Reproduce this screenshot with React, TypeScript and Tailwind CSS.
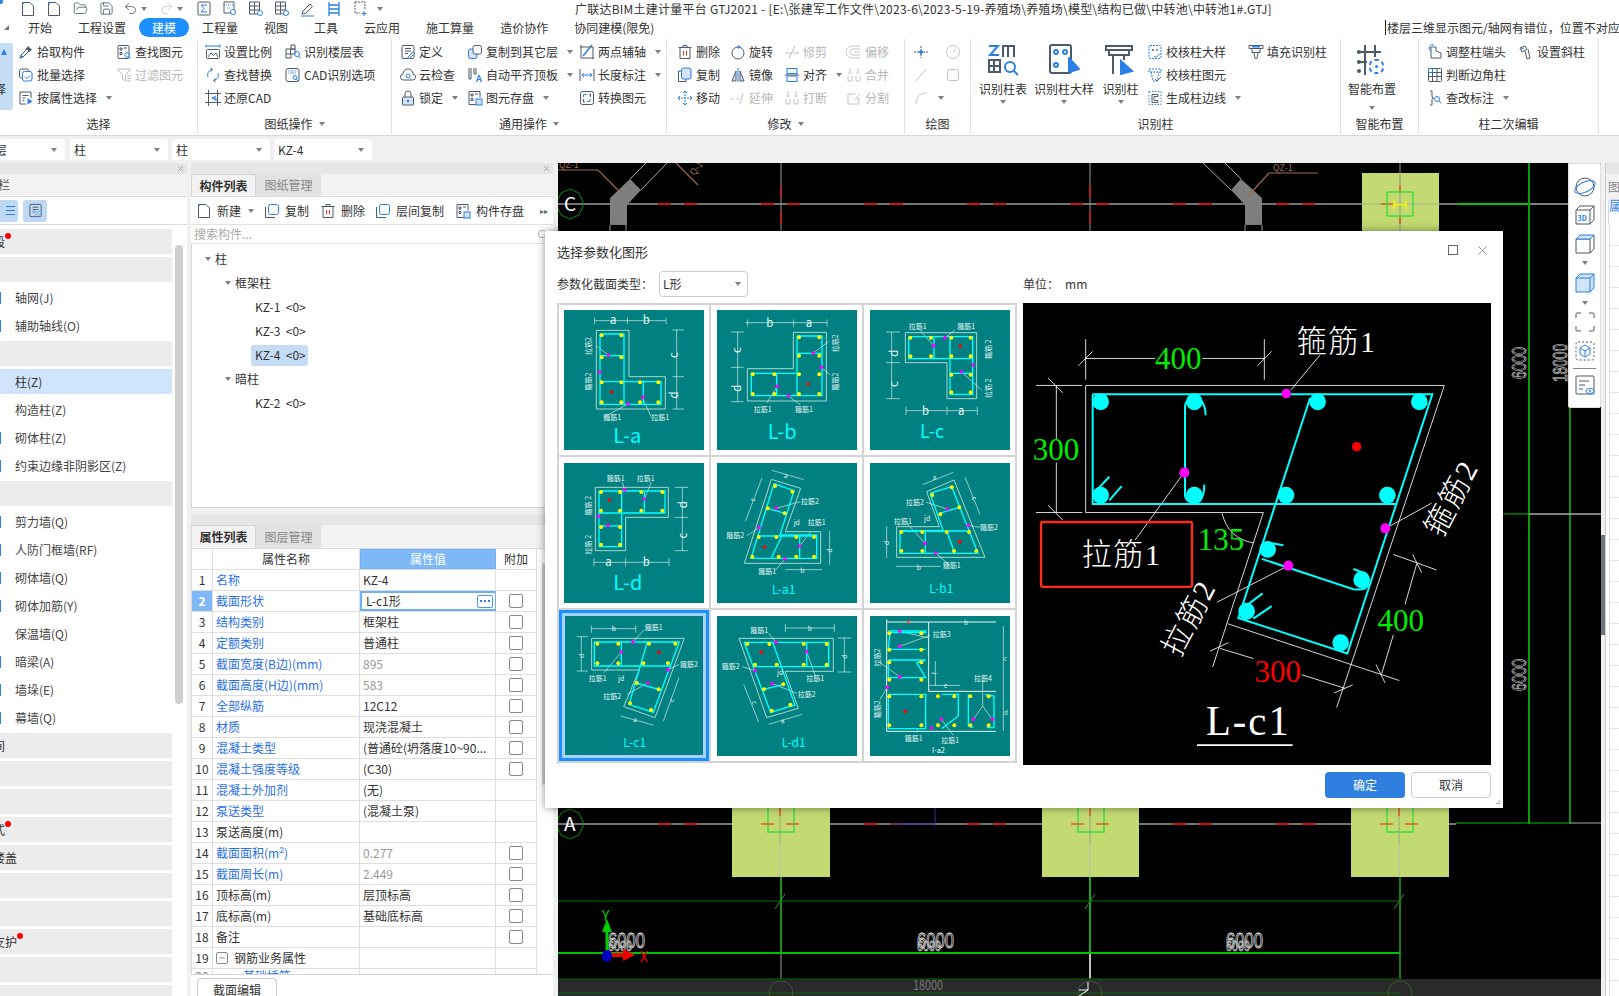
import React from "react";
import { Undo2, Redo2, Save, FolderOpen, X, Search, Minus } from "lucide-react";

const G = "#4e5969";
const B = "#2b7fe6";

// small ribbon icons, all on a 16 grid
const ICONS: Record<string, React.ReactNode> = {
  pick: (<><path d="M2 14l1-3 6-6 2 2-6 6z" stroke={G} /><path d="M8 4l4 4M10 2.5l3.5 3.5-2 .5-2-2z" fill={G} stroke={G} /><path d="M2 14l1.5-2.500 1 1z" fill={B} stroke={B} /></>),
  batch: (<><rect x="1.500" y="2" width="9" height="9" rx="2" stroke={G} /><rect x="4.500" y="4.500" width="9.500" height="9.500" rx="2" stroke={B} fill="#fff" /><path d="M7 9.500l2 2 3-3" stroke={B} /></>),
  attr: (<><path d="M13 8V2H2v12h6" stroke={G} /><path d="M4.500 5.500h6M4.500 8h3M4.500 10.500h2" stroke={G} /><path d="M9.500 8l5 3.500-5 3z" fill={B} /></>),
  find: (<><rect x="2" y="1.500" width="11" height="13" rx="1" stroke={G} /><path d="M4 4h2v2H4zM8 4h3M4 8.500h2v2H4z" stroke={G} /><circle cx="11" cy="11" r="2.200" stroke={B} fill="#fff" /><path d="M12.500 12.500l2 2" stroke={B} /></>),
  filter: (<path d="M1.500 2h13l-5 6v6l-3-2V8zM11 9h4M11 11.500h4M11 14h4" stroke="#bbb" />),
  scale: (<><path d="M1 2h14M1 .5v3M15 .5v3" stroke={B} /><rect x="1.500" y="5.500" width="13" height="9" rx="1" stroke={G} /><path d="M3 13l3-4 2.500 2.500L11 9l2 4" stroke={G} /></>),
  replace: (<><path d="M3 10a5.500 5.500 0 0 1 4-7.500M13 6a5.500 5.500 0 0 1-4 7.500" stroke={B} /><path d="M5.500 1l2 1.500-2 2M10.500 15l-2-1.500 2-2" stroke={G} /></>),
  restore: (<><path d="M3.500 0v16M12.500 0v16M0 3.500h16M0 12.500h16" stroke={G} /><path d="M11 6L7 8l4 2M7 8h4v3" stroke={B} /></>),
  floor: (<><path d="M6 1h4v4H6zM1 5h9v5H6v4H1z" stroke={G} /><path d="M1 10h5M5.500 5v5" stroke={G} /><circle cx="12" cy="10" r="2.500" stroke={B} /><path d="M13.500 12l2 2.500" stroke={B} /></>),
  cad: (<><rect x="1" y="1.500" width="13" height="13" rx="2" stroke={G} /><text x="2.500" y="7" fontSize="4.500" fill={B} stroke="none">CAD</text><circle cx="10" cy="10.500" r="2" stroke={B} /><path d="M11.500 12l2 2.500" stroke={B} /></>),
  define: (<><rect x="2" y="1.500" width="12" height="13" rx="1" stroke={G} /><path d="M5 4.500h6M5 7h6M5 9.500h3" stroke={G} /><path d="M8 13l5-5 1.500 1.500-5 5H8z" fill="#fff" stroke={B} /></>),
  cloud: (<><path d="M4 13a3 3 0 0 1-1-6 5 5 0 0 1 10 0 3 3 0 0 1-1 6z" stroke={G} /><circle cx="8" cy="9" r="2" stroke={B} /><path d="M9.500 10.500l1 1" stroke={B} /></>),
  lock: (<><path d="M5 7V4a3 3 0 0 1 6 0v3" stroke={G} /><rect x="2.500" y="7" width="11" height="8" rx="1" stroke={G} fill="#d2e4fb" /><path d="M8 10v2" stroke={B} strokeWidth="2" /></>),
  copyTo: (<><rect x="1.500" y="5" width="8.500" height="9.500" rx="2" stroke={B} fill="#d2e4fb" /><rect x="6" y="1.500" width="8.500" height="8.500" rx="2" stroke={G} fill="#fff" /></>),
  flat: (<><path d="M2 1v11h2V1M7 1v6h2V1" stroke={G} /><text x="9" y="15" fontSize="9" fontWeight="700" fill={B} stroke="none">A</text></>),
  store: (<><path d="M9 14.500H2v-13h11v6" stroke={G} /><path d="M4 4h2v2H4zM8 4h3M4 8.500h2v2H4z" stroke={G} /><rect x="9" y="9" width="6" height="6" stroke={B} fill="#d2e4fb" /></>),
  axis: (<><path d="M2 1v13h13" stroke={G} /><path d="M4 12L13 1" stroke={B} strokeWidth="1.500" /><path d="M1 3h13v12" stroke={G} /></>),
  length: (<><path d="M1 2v12M15 2v12" stroke={G} /><path d="M3 8h10M5 6L3 8l2 2M11 6l2 2-2 2" stroke={B} /></>),
  convert: (<><rect x="1.500" y="1.500" width="13" height="13" rx="2" stroke={G} /><path d="M4.500 7V4.500h3M11 9v2.500H8" stroke={B} /><path d="M10 4h1.500v3M4.500 9v3H6" stroke={G} /></>),
  del: (<><path d="M1.500 3.500h13M6 3.500V1.500h4v2M3 3.500v11h10v-11" stroke={G} /><path d="M6.500 7v4.500M9.500 7v4.500" stroke="#e33" /></>),
  copy: (<><path d="M4 4H1.500v10.500H9V12" stroke={G} /><rect x="4.500" y="1" width="9.500" height="11" rx="2" stroke={B} fill="#d2e4fb" /></>),
  move: (<><path d="M8 1v14M1 8h14" stroke={B} strokeDasharray="2 1" /><path d="M6 3l2-2 2 2M6 13l2 2 2-2M3 6L1 8l2 2M13 6l2 2-2 2" stroke={B} /></>),
  rotate: (<><circle cx="8" cy="9" r="6" stroke={G} /><path d="M8 1l3 2-3 2z" fill={B} /></>),
  trim: (<path d="M1 9h6M9 9h6M11 2L5 14" stroke="#bbb" />),
  mirror: (<><path d="M8 1v14" stroke={B} /><path d="M6 4L2 14h4zM10 4l4 10h-4z" stroke={G} fill="#d2e4fb" /></>),
  alignBox: (<><rect x="3" y="1.500" width="10" height="5" stroke={B} /><rect x="3" y="9" width="10" height="5.500" stroke={B} /><path d="M1 8h14" stroke={G} /></>),
  offset: (<path d="M14 2H6a3 3 0 0 0 0 12h8M14 5H7a1 1 0 0 0 0 6h7M8 8h6" stroke="#c4c4c4" />),
  merge: (<path d="M4 1v4M12 1v4M2 6h4M10 6h4M2 9v5h4V9M10 9v5h4V9" stroke="#c4c4c4" />),
  extend: (<path d="M1 9h3M6 9h3M13 3l-3 11" stroke="#c4c4c4" />),
  split: (<path d="M2 4h8M2 4v10h11V8M9 10l5-6M11 9l2 1" stroke="#c4c4c4" />),
  point: (<><path d="M1 8h5M10 8h5M8 2v4M8 10v4" stroke={G} strokeDasharray="2 1" /><circle cx="8" cy="8" r="1.500" fill={B} stroke={B} /></>),
  clock: (<><circle cx="8" cy="8" r="6.500" stroke="#c4c4c4" /><path d="M8 8l3-3" stroke="#c4c4c4" /></>),
  line: (<path d="M3 14L13 2" stroke="#c4c4c4" />),
  square: (<rect x="2.500" y="2.500" width="11" height="11" rx="2" stroke="#c4c4c4" />),
  arc: (<path d="M3 14C3 7 7 3 13 3" stroke="#c4c4c4" />),
  chk1: (<><rect x="2" y="1.500" width="12" height="13" rx="1" stroke={B} strokeDasharray="2 1" /><circle cx="6" cy="6" r="1" fill={G} /><circle cx="10" cy="6" r="1" fill={B} /><path d="M7 12l2 1.500 4-4" stroke={B} /></>),
  chk2: (<><path d="M2 2h12v3H2zM4 5l2 9h4l2-9" stroke={B} strokeDasharray="2 1" /><path d="M8 12l2 2 4-4" stroke={G} /></>),
  edge: (<><path d="M2 1.500h12v13H2z" stroke={B} strokeDasharray="1.500 1.500" /><path d="M5 4.500h6v2H7v4h4v2H5z" stroke={G} /></>),
  fill: (<><path d="M1 1.500h14v3H1zM4 4.500v4h8v-4M6 8.500l1 6h2l1-6" stroke={G} /><path d="M4 2.500h8" stroke={B} strokeWidth="2" /></>),
  adjust: (<><path d="M4 3v11h10v-5l-5-2V3z" stroke={G} /><path d="M4 7a3 3 0 0 1 3-6" stroke={B} /></>),
  slant: (<><path d="M2 4l5-2 2 3-5 3zM7 7l2 8 3-1-2-9" stroke={G} /><path d="M3 5l3-1" stroke={B} /></>),
  corner: (<><rect x="1.500" y="1.500" width="13" height="13" rx="1" stroke={G} /><path d="M1.500 5.500h13M1.500 9.500h13M5.500 1.500v13M10 1.500v13" stroke={G} /><path d="M1.500 1.500h4v4h-4z" stroke={B} /></>),
  tag: (<><path d="M3 1h2v6l1.500 1L5 9v6H3" stroke={G} /><circle cx="10" cy="9" r="2.500" stroke={B} /><path d="M12 11l2.500 2.500" stroke={B} /></>),
  paper: (<><path d="M10 1.500H2.500v13h11V5z" stroke={G} /><path d="M2 1h2v2H2z" fill={B} /></>),
  pages: (<><path d="M1.500 4v10.500H11" stroke={G} /><rect x="4.500" y="1.500" width="10" height="10" rx="2" stroke={B} /></>),
  sigma: (<><rect x="2" y="1" width="12" height="13" rx="1" stroke={G} /><path d="M11 4H5l3 3.500L5 11h6" stroke={B} /></>),
  sheetQ: (<><path d="M2 1h10v11H2z" stroke={G} /><path d="M2 4h10M5 7h4" stroke={B} strokeDasharray="1 1" /><circle cx="11" cy="11" r="2.500" stroke={B} fill="#fff" /></>),
  gridQ: (<><path d="M1.500 1h10v12h-10zM1.500 5h10M1.500 9h10M6.500 1v12" stroke={G} /><circle cx="12" cy="12" r="2.500" stroke={B} fill="#fff" /></>),
  pen: (<><path d="M2 13l1-3 7-7 2.500 2.500-7 7z" stroke={G} /><path d="M1 15h13" stroke={B} /></>),
  ladder: (<path d="M3 1v14M13 1v14M3 4h10M3 8h10M3 12h10" stroke={B} strokeWidth="1.300" />),
  plusDoc: (<><path d="M3 1h10v7M3 1v11h5" stroke={G} strokeDasharray="2 1" /><path d="M12 10v5M9.500 12.500h5" stroke={B} /></>),
};

const Ico = ({ n, s = 16 }: { n: string; s?: number }) => (
  <svg width={s} height={s} viewBox="0 0 16 16" fill="none" className="shrink-0">
    {ICONS[n]}
  </svg>
);

const Caret = ({ className = "ml-[6px]" }: { className?: string }) => (
  <span className={`inline-block h-0 w-0 shrink-0 border-x-[3px] border-t-[4px] border-x-transparent border-t-[#808080] ${className}`} />
);

const Btn = ({ n, t, caret, off }: { n: string; t?: string; caret?: boolean; off?: boolean }) => (
  <div className="flex h-[23px] items-center gap-[3px] whitespace-nowrap">
    <Ico n={n} />
    {t && <span className={off ? "text-[#b8b8b8]" : ""}>{t}</span>}
    {caret && <Caret />}
  </div>
);

const Big = ({ w, t, caretTop, children }: { w: string; t: string; caretTop?: string; children: React.ReactNode }) => (
  <div className={`flex flex-col items-center pt-[3px] ${w}`}>
    <svg width="34" height="34" viewBox="0 0 34 34" fill="none" strokeWidth="2">
      {children}
    </svg>
    <span className="mt-[4px] whitespace-nowrap leading-[16px]">{t}</span>
    <Caret className={`${caretTop ?? "mt-[3px]"} ml-0`} />
  </div>
);

const Group = ({ w, label, caret, children }: { w: string; label: string; caret?: boolean; children: React.ReactNode }) => (
  <div className={`flex h-[95px] shrink-0 flex-col border-r border-[#e2e2e2] ${w}`}>
    <div className="flex h-[75px] pt-[1px]">{children}</div>
    <div className="flex h-[19px] items-center justify-center">
      {label}
      {caret && <Caret className="ml-[6px]" />}
    </div>
  </div>
);

const Col = ({ w, children }: { w?: string; children: React.ReactNode }) => (
  <div className={`flex shrink-0 flex-col ${w ?? ""}`}>{children}</div>
);

const TitleBar = () => (
  <div className="flex h-[17px] items-center overflow-hidden bg-white">
    <span className="mb-[14px] h-[5px] w-[3px] rounded-r-full bg-[#2b7fe6]" />
    <div className="ml-[12px] flex items-center">
      {["paper", "paper", "open", "save"].map((n, i) => (
        <div key={i} className="flex w-[26px] justify-center">
          {n === "open" ? <FolderOpen size={15} color={G} strokeWidth={1.300} /> : n === "save" ? <Save size={15} color={G} strokeWidth={1.300} /> : <Ico n={n} />}
        </div>
      ))}
      <div className="flex w-[36px] items-center pl-[4px]">
        <Undo2 size={15} color={G} strokeWidth={1.300} />
        <Caret className="ml-[3px]" />
      </div>
      <div className="flex w-[36px] items-center pl-[4px]">
        <Redo2 size={15} color="#c4c4c4" strokeWidth={1.300} />
        <Caret className="ml-[3px]" />
      </div>
      {["sigma", "sheetQ", "gridQ", "gridQ", "pen", "ladder", "plusDoc"].map((n, i) => (
        <div key={i} className="flex w-[26px] justify-center">
          <Ico n={n} />
        </div>
      ))}
      <Caret className="ml-[4px]" />
    </div>
    <span className="ml-[192px] whitespace-nowrap tracking-[0.24px]">广联达BIM土建计量平台 GTJ2021 - [E:\张建军工作文件\2023-6\2023-5-19-养殖场\养殖场\模型\结构已做\中转池\中转池1#.GTJ]</span>
  </div>
);

const TabBar = () => (
  <div className="flex h-[21px] items-center bg-white">
    <span className="ml-[4px] h-0 w-0 border-b-[5px] border-l-[5px] border-b-[#777] border-l-transparent" />
    <div className="ml-[19px] flex items-center gap-[26px]">
      <span>开始</span>
      <span>工程设置</span>
      <span className="-mx-[13px] flex h-[19px] items-center rounded-full bg-[#1e8fff] px-[13px] text-white">建模</span>
      <span>工程量</span>
      <span>视图</span>
      <span>工具</span>
      <span>云应用</span>
      <span>施工算量</span>
      <span>造价协作</span>
      <span>协同建模(限免)</span>
    </div>
    <div className="ml-auto h-[15px] w-[234px] overflow-hidden whitespace-nowrap border-l border-[#222] pl-[1px] leading-[15px]">
      楼层三维显示图元/轴网有错位，位置不对应
    </div>
  </div>
);

const Ribbon = () => (
  <div className="flex h-[98px] border-b border-[#d8d8d8] bg-white pt-[1px]">
    <Group w="w-[198px]" label="选择">
      <div className="mt-[3px] flex h-[67px] w-[13px] shrink-0 flex-col overflow-hidden rounded-r-[3px] bg-[#c5dcf5]">
        <span className="mt-[6px] ml-[1px] h-0 w-0 border-x-[3px] border-b-[6px] border-x-transparent border-b-[#2b7fe6]" />
        <span className="-ml-[6px] mt-[26px] leading-[16px]">择</span>
      </div>
      <Col w="ml-[5px] w-[98px]">
        <Btn n="pick" t="拾取构件" />
        <Btn n="batch" t="批量选择" />
        <Btn n="attr" t="按属性选择" caret />
      </Col>
      <Col>
        <Btn n="find" t="查找图元" />
        <Btn n="filter" t="过滤图元" off />
      </Col>
    </Group>
    <Group w="w-[194px]" label="图纸操作" caret>
      <Col w="ml-[7px] w-[80px]">
        <Btn n="scale" t="设置比例" />
        <Btn n="replace" t="查找替换" />
        <Btn n="restore" t="还原CAD" />
      </Col>
      <Col>
        <Btn n="floor" t="识别楼层表" />
        <Btn n="cad" t="CAD识别选项" />
      </Col>
    </Group>
    <Group w="w-[275px]" label="通用操作" caret>
      <Col w="ml-[8px] w-[67px]">
        <Btn n="define" t="定义" />
        <Btn n="cloud" t="云检查" />
        <Btn n="lock" t="锁定" caret />
      </Col>
      <Col w="w-[112px]">
        <Btn n="copyTo" t="复制到其它层" caret />
        <Btn n="flat" t="自动平齐顶板" caret />
        <Btn n="store" t="图元存盘" caret />
      </Col>
      <Col>
        <Btn n="axis" t="两点辅轴" caret />
        <Btn n="length" t="长度标注" caret />
        <Btn n="convert" t="转换图元" />
      </Col>
    </Group>
    <Group w="w-[238px]" label="修改" caret>
      <Col w="ml-[10px] w-[53px]">
        <Btn n="del" t="删除" />
        <Btn n="copy" t="复制" />
        <Btn n="move" t="移动" />
      </Col>
      <Col w="w-[54px]">
        <Btn n="rotate" t="旋转" />
        <Btn n="mirror" t="镜像" />
        <Btn n="extend" t="延伸" off />
      </Col>
      <Col w="w-[62px]">
        <Btn n="trim" t="修剪" off />
        <Btn n="alignBox" t="对齐" caret />
        <Btn n="merge" t="打断" off />
      </Col>
      <Col>
        <Btn n="offset" t="偏移" off />
        <Btn n="merge" t="合并" off />
        <Btn n="split" t="分割" off />
      </Col>
    </Group>
    <Group w="w-[66px]" label="绘图">
      <Col w="ml-[8px] w-[32px]">
        <Btn n="point" />
        <Btn n="line" />
        <Btn n="arc" caret />
      </Col>
      <Col>
        <Btn n="clock" />
        <Btn n="square" />
      </Col>
    </Group>
    <Group w="w-[370px]" label="识别柱">
      <div className="ml-[1px] flex">
        <Big w="w-[62px]" t="识别柱表">
          <path d="M3 3h9L4 12h9" stroke={B} />
          <path d="M17 14V3h11v11M22 3v11M3 17h11v12H3zM3 23h11M8 17v12" stroke={G} />
          <circle cx="24" cy="24" r="5" stroke={B} />
          <path d="M28 28l4 4" stroke={B} />
        </Big>
        <Big w="w-[60px]" t="识别柱大样">
          <rect x="3" y="2" width="21" height="28" rx="2" stroke={G} />
          <circle cx="9" cy="9" r="2" stroke={B} />
          <circle cx="18" cy="9" r="2" stroke={B} />
          <circle cx="9" cy="22" r="2" stroke={B} />
          <path d="M22 15l10 11-10 3z" fill={B} stroke={B} strokeLinejoin="round" />
        </Big>
        <Big w="w-[53px]" t="识别柱">
          <path d="M2 3h26v4H2zM5 7v5h20V7M9 12v19M20 12v5" stroke={G} />
          <path d="M17 18l11 10-11 3z" fill={B} stroke={B} />
        </Big>
      </div>
      <Col w="w-[101px]">
        <Btn n="chk1" t="校核柱大样" />
        <Btn n="chk2" t="校核柱图元" />
        <Btn n="edge" t="生成柱边线" caret />
      </Col>
      <Col>
        <Btn n="fill" t="填充识别柱" />
      </Col>
    </Group>
    <Group w="w-[78px]" label="智能布置">
      <Big w="w-[62px]" t="智能布置" caretTop="mt-[9px]">
        <path d="M10 2v30M20 2v12M2 9h24M2 19h10" stroke={G} />
        <circle cx="4" cy="9" r="2" fill={G} />
        <circle cx="4" cy="19" r="2" fill={G} />
        <circle cx="4" cy="28" r="2" fill={G} />
        <rect x="15" y="17" width="13" height="13" rx="5" stroke={B} strokeDasharray="4 3" />
        <circle cx="21.500" cy="23.500" r="1.500" fill={B} />
      </Big>
    </Group>
    <Group w="w-[180px]" label="柱二次编辑">
      <Col w="ml-[8px] w-[91px]">
        <Btn n="adjust" t="调整柱端头" />
        <Btn n="corner" t="判断边角柱" />
        <Btn n="tag" t="查改标注" caret />
      </Col>
      <Col>
        <Btn n="slant" t="设置斜柱" />
      </Col>
    </Group>
  </div>
);

const Pick = ({ w, t, clip }: { w: string; t: string; clip?: boolean }) => (
  <div className={`flex h-[21px] items-center justify-between rounded-[3px] bg-white pr-[8px] ${clip ? "" : "pl-[4px]"} ${w}`}>
    <span className={clip ? "-ml-[5px]" : ""}>{t}</span>
    <Caret className="ml-0" />
  </div>
);

const FilterBar = () => (
  <div className="flex h-[27px] items-start gap-[4px] bg-[#f0f0f0] pt-[3px]">
    <Pick w="w-[65px] mr-[1px]" t="层" clip />
    <Pick w="w-[98px]" t="柱" />
    <Pick w="w-[98px]" t="柱" />
    <Pick w="w-[98px]" t="KZ-4" />
  </div>
);

type NavRow = { t?: string; bar?: boolean; on?: boolean; dot?: boolean; mark?: boolean };
const NAV: NavRow[] = [
  { t: "段", bar: true, dot: true },
  { bar: true },
  { t: "轴网(J)", mark: true },
  { t: "辅助轴线(O)", mark: true },
  { bar: true },
  { t: "柱(Z)", on: true, mark: true },
  { t: "构造柱(Z)" },
  { t: "砌体柱(Z)", mark: true },
  { t: "约束边缘非阴影区(Z)", mark: true },
  { bar: true },
  { t: "剪力墙(Q)", mark: true },
  { t: "人防门框墙(RF)", mark: true },
  { t: "砌体墙(Q)", mark: true },
  { t: "砌体加筋(Y)", mark: true },
  { t: "保温墙(Q)" },
  { t: "暗梁(A)", mark: true },
  { t: "墙垛(E)", mark: true },
  { t: "幕墙(Q)", mark: true },
  { t: "间", bar: true },
  { bar: true },
  { bar: true },
  { t: "式", bar: true, dot: true },
  { t: "楼盖", bar: true },
  { bar: true },
  { bar: true },
  { t: "支护", bar: true, dot: true },
  { bar: true },
  { bar: true },
];

const PanelHead = () => (
  <div className="flex h-[11px] shrink-0 items-center justify-end bg-[#e6e6e6] pr-[2px]">
    <X size={9} color="#999" />
  </div>
);

const LeftPanel = () => (
  <div className="flex h-full w-[187px] shrink-0 flex-col overflow-hidden bg-white">
    <PanelHead />
    <div className="flex h-[23px] shrink-0 items-center border-b border-[#dcdcdc] bg-[#f2f2f2]">
      <span className="-ml-[2px] text-[#555]">栏</span>
    </div>
    <div className="flex h-[28px] shrink-0 items-center gap-[5px] border-b border-[#dcdcdc]">
      <div className="flex h-[22px] w-[18px] items-center justify-end rounded-r-[3px] bg-[#bfd8f3] pr-[3px]">
        <span className="flex h-[9px] w-[9px] flex-col justify-between">
          <span className="h-[1px] bg-[#2b7fe6]" />
          <span className="h-[1px] bg-[#2b7fe6]" />
          <span className="h-[1px] bg-[#2b7fe6]" />
        </span>
      </div>
      <div className="flex h-[22px] w-[24px] items-center justify-center rounded-[3px] bg-[#bfd8f3]">
        <Ico n="define" s={15} />
      </div>
    </div>
    <div className="flex min-h-0 flex-1 pt-[4px]">
      <div className="w-[172px] shrink-0">
        {NAV.map((r, i) =>
          r.bar || r.on ? (
            <div key={i} className="h-[28px]">
              <div className={`relative flex h-[25px] items-center ${r.on ? "bg-[#d0e4fb]" : "bg-[#ececec]"}`}>
                {r.on ? <span className="ml-[15px]">{r.t}</span> : <span className="-ml-[7px]">{r.t}</span>}
                {r.dot && <span className="mb-[12px] h-[6px] w-[6px] rounded-full bg-[#f00]" />}
              </div>
            </div>
          ) : (
            <div key={i} className="flex h-[28px] items-center pb-[2px]">
              <span className={`h-[12px] w-[1px] ${r.mark ? "bg-[#2b7fe6]" : ""}`} />
              <span className="ml-[14px] whitespace-nowrap text-[#444]">{r.t}</span>
            </div>
          ),
        )}
      </div>
      <div className="ml-[3px] mt-[16px] h-[459px] w-[8px] rounded-full bg-[#cfcfcf]" />
    </div>
  </div>
);

const Tabs = ({ a, b, h = "h-[23px]" }: { a: string; b: string; h?: string }) => (
  <div className={`flex shrink-0 items-stretch border-b border-[#dcdcdc] bg-[#f2f2f2] ${h}`}>
    <span className="flex w-[65px] items-center justify-center border border-b-0 border-[#d5d5d5] font-bold">{a}</span>
    <span className="flex w-[65px] items-center justify-center bg-[#e2e2e2] text-[#888]">{b}</span>
  </div>
);

const TreeRow = ({ t, pl, arrow, on }: { t: string; pl: string; arrow?: boolean; on?: boolean }) => (
  <div className={`flex h-[24px] items-center whitespace-pre ${pl}`}>
    {arrow && <Caret className="mr-[4px] ml-0" />}
    <span className={on ? "-ml-[4px] flex h-[21px] items-center rounded-[3px] bg-[#c5dcf5] pl-[4px] pr-[2px]" : ""}>{t}</span>
  </div>
);

const TopPanel = () => (
  <div className="flex h-[345px] shrink-0 flex-col bg-white">
    <PanelHead />
    <Tabs a="构件列表" b="图纸管理" />
    <div className="flex h-[28px] shrink-0 items-center whitespace-nowrap border-b border-[#e2e2e2] pl-[5px]">
      <Ico n="paper" />
      <span className="ml-[5px]">新建</span>
      <Caret className="ml-[7px]" />
      <span className="ml-[10px] flex items-center gap-[5px]"><Ico n="pages" />复制</span>
      <span className="ml-[11px] flex items-center gap-[5px]"><Ico n="del" />删除</span>
      <span className="ml-[10px] flex items-center gap-[5px]"><Ico n="pages" />层间复制</span>
      <span className="ml-[11px] flex items-center gap-[5px]"><Ico n="store" />构件存盘</span>
      <span className="ml-[16px] text-[8px] text-[#666]">▸▸</span>
    </div>
    <div className="flex h-[19px] shrink-0 items-center justify-between border-b border-[#e2e2e2] pl-[3px] pr-[5px] text-[#aaa]">
      <span>搜索构件...</span>
      <Search size={11} color="#aaa" />
    </div>
    <div className="flex-1 border-b border-l border-[#d5d5d5] pt-[3px]">
      <TreeRow t="柱" pl="pl-[13px]" arrow />
      <TreeRow t="框架柱" pl="pl-[33px]" arrow />
      <TreeRow t="KZ-1  <0>" pl="pl-[63px]" />
      <TreeRow t="KZ-3  <0>" pl="pl-[63px]" />
      <TreeRow t="KZ-4  <0>" pl="pl-[63px]" on />
      <TreeRow t="暗柱" pl="pl-[33px]" arrow />
      <TreeRow t="KZ-2  <0>" pl="pl-[63px]" />
    </div>
  </div>
);

type Prop = { n: string; v?: string; link?: boolean; dim?: boolean; box?: boolean };
const PROPS: Prop[] = [
  { n: "名称", v: "KZ-4", link: true },
  { n: "截面形状", v: "L-c1形", link: true, box: true },
  { n: "结构类别", v: "框架柱", link: true, box: true },
  { n: "定额类别", v: "普通柱", link: true, box: true },
  { n: "截面宽度(B边)(mm)", v: "895", link: true, dim: true, box: true },
  { n: "截面高度(H边)(mm)", v: "583", link: true, dim: true, box: true },
  { n: "全部纵筋", v: "12C12", link: true, box: true },
  { n: "材质", v: "现浇混凝土", link: true, box: true },
  { n: "混凝土类型", v: "(普通砼(坍落度10~90...", link: true, box: true },
  { n: "混凝土强度等级", v: "(C30)", link: true, box: true },
  { n: "混凝土外加剂", v: "(无)", link: true },
  { n: "泵送类型", v: "(混凝土泵)", link: true },
  { n: "泵送高度(m)" },
  { n: "截面面积(m²)", v: "0.277", link: true, dim: true, box: true },
  { n: "截面周长(m)", v: "2.449", link: true, dim: true, box: true },
  { n: "顶标高(m)", v: "层顶标高", box: true },
  { n: "底标高(m)", v: "基础底标高", box: true },
  { n: "备注", box: true },
];

const PropRow = ({ p, i }: { p: Prop; i: number }) => {
  const picked = i === 1;
  return (
    <div className="flex h-[21px] border-b border-[#dedede]">
      <div className={`flex w-[21px] shrink-0 items-center justify-center border-r border-[#dedede] ${picked ? "bg-[#7eb8f7] font-bold text-white" : ""}`}>{i + 1}</div>
      <div className={`flex w-[147px] shrink-0 items-center border-r border-[#dedede] pl-[3px] whitespace-nowrap ${p.link ? "text-[#2b6fe6]" : ""}`}>{p.n}</div>
      <div className={`flex w-[136px] shrink-0 items-center whitespace-nowrap border-r pl-[3px] ${picked ? "border-2 border-[#6fb0f5]" : "border-r-[#dedede]"} ${p.dim ? "text-[#999]" : ""}`}>
        <span className={picked ? "ml-[1px] flex-1" : ""}>{p.v}</span>
        {picked && (
          <span className="mr-[2px] flex h-[13px] w-[16px] items-center justify-center gap-[2px] rounded-[2px] border border-[#4a98ee]">
            <span className="h-[2px] w-[2px] bg-[#2b7fe6]" />
            <span className="h-[2px] w-[2px] bg-[#2b7fe6]" />
            <span className="h-[2px] w-[2px] bg-[#2b7fe6]" />
          </span>
        )}
      </div>
      <div className="flex w-[41px] shrink-0 items-center justify-center border-r border-[#dedede]">
        {p.box && <span className="h-[14px] w-[14px] rounded-[2px] border border-[#888]" />}
      </div>
    </div>
  );
};

const PropPanel = () => (
  <div className="mt-[6px] flex min-h-0 flex-1 flex-col bg-white">
    <PanelHead />
    <Tabs a="属性列表" b="图层管理" h="h-[24px]" />
    <div className="flex h-[426px] shrink-0 border-b border-l border-[#d5d5d5] overflow-hidden">
      <div className="w-[345px] shrink-0">
        <div className="flex h-[21px] border-b border-[#dedede]">
          <div className="w-[21px] shrink-0 border-r border-[#dedede]" />
          <div className="flex w-[147px] shrink-0 items-center justify-center border-r border-[#dedede]">属性名称</div>
          <div className="flex w-[136px] shrink-0 items-center justify-center border border-[#6fb0f5] bg-[#7eb8f7] text-white">属性值</div>
          <div className="flex w-[41px] shrink-0 items-center justify-center border-r border-[#dedede]">附加</div>
        </div>
        {PROPS.map((p, i) => (
          <PropRow key={i} p={p} i={i} />
        ))}
        <div className="flex h-[21px] border-b border-[#dedede]">
          <div className="flex w-[21px] shrink-0 items-center justify-center border-r border-[#dedede]">19</div>
          <div className="flex w-[147px] shrink-0 items-center gap-[6px] border-r border-[#dedede] pl-[3px]">
            <span className="flex h-[12px] w-[12px] items-center justify-center rounded-[2px] border border-[#888]"><Minus size={8} color="#555" /></span>
            钢筋业务属性
          </div>
          <div className="w-[136px] shrink-0 border-r border-[#dedede]" />
          <div className="w-[41px] shrink-0 border-r border-[#dedede]" />
        </div>
        <div className="flex h-[8px] overflow-hidden">
          <div className="w-[21px] shrink-0 border-r border-[#dedede] text-center leading-[14px] text-[#888]">20</div>
          <div className="w-[147px] shrink-0 border-r border-[#dedede] pl-[30px] leading-[14px] text-[#2b6fe6]">基础插筋</div>
          <div className="w-[136px] shrink-0 border-r border-[#dedede]" />
          <div className="w-[41px] shrink-0 border-r border-[#dedede]" />
        </div>
      </div>
      <div className="ml-[5px] mt-[14px] h-[222px] w-[4px] rounded-full bg-[#cfcfcf]" />
    </div>
    <div className="flex flex-1 items-start overflow-hidden pl-[6px] pt-[3px]">
      <span className="flex h-[22px] w-[80px] items-center justify-center rounded-t-[4px] border border-b-0 border-[#cfcfcf] bg-white">截面编辑</span>
    </div>
  </div>
);

// red dashes that sit on an axis line, one pair per repeat
const dashes = (y: number, xs: number[]) =>
  xs.map((x) => (
    <g key={x} stroke="#d01010" strokeWidth="2">
      <line x1={x} y1={y} x2={x + 13} y2={y} />
      <line x1={x + 26} y1={y} x2={x + 39} y2={y} />
    </g>
  ));

const Pillar = ({ x }: { x: number }) => (
  <g>
    <rect x={x} y="808" width={x === 1042 ? 97 : 98} height="69" fill="#c3da72" />
    <line x1={x + 48} y1="808" x2={x + 48} y2="843" stroke="#9aa87a" />
    <line x1={x + 48} y1="843" x2={x + 48} y2="877" stroke="#bbb" />
    <path d={`M${x + 36} 808v24h26v-24`} stroke="#3ce03c" fill="none" strokeWidth="1.500" />
    <g stroke="#e05a20" strokeWidth="1.500">
      <line x1={x + 29} y1="824" x2={x + 42} y2="824" />
      <line x1={x + 54} y1="824" x2={x + 67} y2="824" />
      <line x1={x + 48} y1="808" x2={x + 48} y2="816" />
    </g>
  </g>
);

const DimText = ({ x }: { x: number }) => (
  <g fill="none" stroke="#eee" strokeWidth="0.800" className="font-[family-name:'Liberation_Sans',sans-serif]">
    <text x={x} y="948" fontSize="22" textLength="37" lengthAdjust="spacingAndGlyphs">6000</text>
    <text x={x} y="951" fontSize="15" textLength="24" lengthAdjust="spacingAndGlyphs" stroke="#bbb">6000</text>
  </g>
);

const Canvas = () => (
  <div className="relative h-full w-[1043px] shrink-0 bg-black">
    <svg viewBox="558 163 1043 833" width="1043" height="833" className="block">
      {/* top axis */}
      <line x1="558" y1="204" x2="1362" y2="204" stroke="#9a9a9a" strokeWidth="1.500" />
      {dashes(204, [658, 761, 864, 967, 1070, 1173, 1276])}
      <line x1="1439" y1="204" x2="1457" y2="204" stroke="#9a9a9a" strokeWidth="1.500" />
      <line x1="1457" y1="204" x2="1529" y2="204" stroke="#00c000" strokeWidth="2" />
      <line x1="1529" y1="204" x2="1568" y2="204" stroke="#aaa" strokeWidth="1.500" />
      <line x1="781" y1="163" x2="781" y2="231" stroke="#999" />
      <line x1="1090" y1="163" x2="1090" y2="231" stroke="#999" />
      <g stroke="#d01010" strokeWidth="1.500">
        <path d="M781 185v13M781 211v13M1090 185v13M1090 211v13" />
      </g>
      {/* grey wall stubs */}
      <path d="M610 225v-27l20-19 11 11-14 15v20z" fill="#7e7e7e" />
      <path d="M630 179l16-16M641 190l26-27M610 225v6M626 225v6" stroke="#aaa" fill="none" />
      <path d="M1262 225v-27l-21-19-10 11 14 15v20z" fill="#7e7e7e" />
      <path d="M1241 179l-16-16M1231 190l-28-27M1262 225v6M1245 225v6" stroke="#aaa" fill="none" />
      <path d="M558 170h40l23 23M1318 173h-49l-21 23M676 163l22 22" stroke="#a06a50" fill="none" strokeWidth="1.200" />
      <text x="1273" y="171" fontSize="9" fill="#a06a50">QZ-1</text>
      <text x="559" y="168" fontSize="9" fill="#a06a50">QZ-1</text>
      <text x="0" y="0" fontSize="9" fill="#a06a50" transform="translate(694 176) rotate(-50)">Q-1</text>
      {/* top right pillar */}
      <rect x="1362" y="173" width="77" height="58" fill="#c3da72" />
      <line x1="1400" y1="163" x2="1400" y2="231" stroke="#8f9a80" />
      <line x1="1362" y1="204" x2="1439" y2="204" stroke="#a8b090" />
      <path d="M1381 204h12M1400 185v8M1400 216v8" stroke="#e05a20" strokeWidth="1.500" />
      <rect x="1387" y="192" width="26" height="24" rx="1" fill="none" stroke="#3ce03c" strokeWidth="1.500" />
      <path d="M1394 200v9M1406 200v9M1394 204.500h12" stroke="#f5f500" strokeWidth="1.500" fill="none" />
      {/* right grid */}
      <line x1="1529" y1="163" x2="1529" y2="824" stroke="#0a9a0a" strokeWidth="2" />
      <line x1="1570" y1="163" x2="1570" y2="824" stroke="#10c010" strokeWidth="1.500" />
      <line x1="1503" y1="514" x2="1529" y2="514" stroke="#00c000" />
      <line x1="1529" y1="514" x2="1601" y2="514" stroke="#aaa" strokeWidth="1.500" />
      <line x1="1456" y1="823" x2="1570" y2="823" stroke="#00c000" />
      <line x1="1570" y1="823" x2="1601" y2="823" stroke="#aaa" />
      <g fill="none" stroke="#ddd" strokeWidth="0.700" className="font-[family-name:'Liberation_Sans',sans-serif]">
        <text transform="translate(1526 379) rotate(-90)" fontSize="20" textLength="32" lengthAdjust="spacingAndGlyphs">6000</text>
        <text transform="translate(1567 382) rotate(-90)" fontSize="20" textLength="38" lengthAdjust="spacingAndGlyphs">18000</text>
        <text transform="translate(1526 691) rotate(-90)" fontSize="20" textLength="32" lengthAdjust="spacingAndGlyphs">6000</text>
      </g>
      {/* bottom axis */}
      <line x1="558" y1="824" x2="1456" y2="824" stroke="#9a9a9a" strokeWidth="1.500" />
      {dashes(824, [658, 864, 967, 1173, 1276])}
      <line x1="891" y1="824" x2="935" y2="824" stroke="#3a3a90" strokeWidth="1.500" />
      <line x1="935" y1="808" x2="935" y2="826" stroke="#3a3a90" />
      <Pillar x={732} />
      <Pillar x={1042} />
      <Pillar x={1351} />
      <line x1="781" y1="877" x2="781" y2="953" stroke="#22c022" strokeWidth="1.500" />
      <line x1="1090" y1="877" x2="1090" y2="953" stroke="#22e022" strokeWidth="1.500" />
      <line x1="1400" y1="877" x2="1400" y2="979" stroke="#22a022" strokeWidth="1.500" />
      <line x1="781" y1="953" x2="781" y2="980" stroke="#999" />
      <line x1="1090" y1="953" x2="1090" y2="980" stroke="#fff" strokeWidth="1.500" />
      <line x1="558" y1="901" x2="1400" y2="901" stroke="#064c06" strokeWidth="1.500" />
      <line x1="558" y1="953" x2="1400" y2="953" stroke="#00c000" strokeWidth="2" />
      <path d="M775 909l10-15M1085 909l10-15M1394 909l10-15" stroke="#2a9a2a" />
      <rect x="558" y="979" width="1043" height="17" fill="#2a2a2a" />
      <line x1="558" y1="979" x2="1400" y2="979" stroke="#0a4a0a" strokeWidth="1.500" />
      <line x1="558" y1="993" x2="1400" y2="993" stroke="#155515" strokeWidth="1.500" />
      <DimText x={608} />
      <DimText x={917} />
      <DimText x={1226} />
      <text x="913" y="990" fontSize="14" fill="#777" textLength="30" lengthAdjust="spacingAndGlyphs">18000</text>
      <g fill="none" stroke="#3a5a3a">
        <circle cx="781" cy="993" r="12" />
        <circle cx="1090" cy="993" r="12" />
        <circle cx="1400" cy="993" r="12" />
      </g>
      <path d="M1088 982v8h-9M1079 996l9-6" stroke="#fff" fill="none" />
      {/* axis bubbles */}
      <g fill="none" stroke="#0c8a0c">
        <polygon points="570,189 579,193 584,204 579,215 570,219 561,215 556,204 561,193" />
        <polygon points="570,809 579,813 584,824 579,835 570,839 561,835 556,824 561,813" />
      </g>
      <text x="564" y="211" fontSize="19" fill="#fff">C</text>
      <text x="564" y="831" fontSize="19" fill="#fff">A</text>
      {/* UCS marker */}
      <path d="M607 955v-26" stroke="#00d000" strokeWidth="3" />
      <path d="M602 932l5-13 5 13z" fill="#00d000" />
      <path d="M610 955h15" stroke="#f00000" strokeWidth="4" />
      <path d="M623 949l12 6-12 6z" fill="#f00000" />
      <ellipse cx="607" cy="956" rx="5" ry="6" fill="#0000c0" />
      <text x="602" y="921" fontSize="14" fill="#00d000">Y</text>
      <text x="640" y="962" fontSize="14" fill="#f00000">X</text>
    </svg>
    <div className="absolute left-[1010px] top-0 flex h-[245px] w-[33px] flex-col items-center rounded-b-[2px] border border-[#dedede] bg-white pt-[12px]">
      <svg width="22" height="22" viewBox="0 0 22 22" fill="none" className="shrink-0">
        <ellipse cx="11" cy="11" rx="9" ry="9" stroke={G} />
        <ellipse cx="11" cy="11" rx="11" ry="5" transform="rotate(-25 11 11)" stroke={B} />
      </svg>
      <svg width="20" height="20" viewBox="0 0 20 20" fill="none" className="mt-[7px] shrink-0">
        <path d="M1 5h14v14H1zM1 5l4-4h14v14l-4 4M15 5l4-4" stroke={G} />
        <text x="2.500" y="16" fontSize="7" fontWeight="700" fill={B}>3D</text>
      </svg>
      <svg width="20" height="20" viewBox="0 0 20 20" fill="none" className="mt-[9px] shrink-0">
        <path d="M1 5h14v14H1zM15 19l4-4V1M15 5l4-4" stroke={G} />
        <path d="M1 5l4-4h14l-4 4z" stroke={B} fill="#d2e4fb" />
      </svg>
      <Caret className="ml-0 mt-[7px]" />
      <svg width="20" height="20" viewBox="0 0 20 20" fill="none" className="mt-[8px] shrink-0">
        <path d="M1 5h14v14H1zM1 5l4-4h14v14l-4 4M15 5l4-4" stroke={B} fill="#d2e4fb" />
      </svg>
      <Caret className="ml-0 mt-[8px]" />
      <svg width="20" height="20" viewBox="0 0 20 20" fill="none" className="mt-[7px] shrink-0">
        <path d="M1 6V2a1 1 0 0 1 1-1h4M14 1h4a1 1 0 0 1 1 1v4M19 14v4a1 1 0 0 1-1 1h-4M6 19H2a1 1 0 0 1-1-1v-4" stroke={G} />
      </svg>
      <svg width="20" height="20" viewBox="0 0 20 20" fill="none" className="mt-[9px] shrink-0">
        <rect x="1" y="1" width="18" height="18" rx="2" stroke={G} strokeDasharray="2 2" />
        <path d="M10 4l5 3v6l-5 3-5-3V7zM5 7l5 3 5-3M10 10v6" stroke={B} />
      </svg>
      <span className="mt-[7px] h-[1px] w-[23px] shrink-0 bg-[#888]" />
      <svg width="20" height="20" viewBox="0 0 20 20" fill="none" className="mt-[6px] shrink-0">
        <rect x="1" y="1" width="18" height="18" rx="1" stroke={G} />
        <path d="M4 6h10M4 10h6M4 14h4" stroke={G} />
        <ellipse cx="15" cy="16" rx="4" ry="2.500" fill="#fff" stroke={B} />
        <circle cx="15" cy="16" r="1" fill={B} />
      </svg>
    </div>
  </div>
);

const RightEdge = () => (
  <div className="flex h-full flex-1 bg-[#f0f0f0]">
    <div className="mt-[372px] h-[100px] w-[4px] shrink-0 bg-[#6b7680]" />
    <div className="flex flex-1 flex-col border-l border-[#ccc] bg-white">
      <div className="h-[11px] shrink-0 bg-[#e6e6e6]" />
      <div className="flex h-[25px] shrink-0 items-center overflow-hidden bg-[#f2f2f2] pl-[2px] text-[#888]">图</div>
      <div className="ml-[2px] h-[26px] shrink-0 rounded-tl-[4px] border-l border-t border-[#cfd8e6] text-[#2b7fe6]">属</div>
      <div className="ml-[3px] flex-1 border-l border-[#ddd]">
        {Array.from({ length: 36 }).map((_, i) => (
          <div key={i} className="h-[21px] border-b border-[#e4e4e4]" />
        ))}
      </div>
    </div>
  </div>
);

// ---- dialog thumbnails, on a 420 grid (140px shown) ----
type Label = [number, number, string, number?, number?, string?];
type Thumb = {
  wall: string;
  bars: string[];
  yellow: number[][];
  pink: number[][];
  red: number[];
  dims: string[];
  labels: Label[];
  name: [number, number, string, number];
  white?: boolean;
};

const THUMBS: Thumb[] = [
  {
    wall: "97,61 195,61 195,200 304,200 304,297 97,297",
    bars: ["108,72 180,72 180,283 108,283 108,72", "108,215 291,215 291,283 180,283", "108,137 180,137", "238,215 238,283"],
    yellow: [[113,76],[172,76],[113,142],[172,142],[113,217],[172,217],[228,217],[283,217],[113,277],[172,277],[228,277],[283,277]],
    pink: [[133,135],[107,187],[237,262],[192,282]],
    red: [142, 246],
    dims: ["92,32 306,32", "92,22 92,42", "190,22 190,42", "306,22 306,42", "338,58 338,298", "325,60 360,60", "325,200 360,200", "325,297 360,297", "98,108 133,135", "118,322 192,282", "235,262 262,322"],
    labels: [[138,42,"a",34],[236,42,"b",34],[342,135,"c",34,-90],[342,255,"d",34,-90],[118,330,"箍筋1",21],[262,330,"拉筋1",21],[82,108,"拉筋2",21,-90],[82,215,"箍筋2",21,-90]],
    name: [148, 400, "L-a", 60],
  },
  {
    wall: "229,67 328,67 328,273 91,273 91,176 229,176",
    bars: ["240,78 315,78 315,257 240,257 240,78", "240,190 103,190 103,257 240,257", "240,130 315,130", "179,190 179,257"],
    yellow: [[246,82],[307,82],[246,137],[307,137],[107,193],[172,193],[246,193],[307,193],[107,252],[172,252],[246,252],[307,252]],
    pink: [[289,129],[313,172],[181,229],[215,258]],
    red: [274, 222],
    dims: ["85,38 330,38", "92,28 92,50", "230,28 230,50", "330,28 330,50", "62,66 62,275", "42,66 80,66", "42,172 80,172", "42,275 80,275", "289,129 335,95", "313,172 340,195", "150,278 181,229", "215,258 250,285"],
    labels: [[148,50,"b",34],[266,50,"a",34],[72,120,"c",34,-90],[72,235,"d",34,-90],[110,305,"拉筋1",21],[234,305,"箍筋1",21],[362,100,"拉筋2",21,-90],[362,215,"箍筋2",21,-90]],
    name: [152, 386, "L-b", 60],
  },
  {
    wall: "106,68 320,68 320,266 231,266 231,158 106,158",
    bars: ["116,80 308,80 308,146 116,146 116,80", "240,80 240,253 308,253 308,146", "240,190 308,190", "192,80 192,146"],
    yellow: [[121,83],[183,83],[244,83],[302,83],[121,139],[183,139],[244,139],[302,139],[244,194],[302,194],[244,247],[302,247]],
    pink: [[225,83],[191,107],[309,165],[275,186]],
    red: [271, 108],
    dims: ["108,302 322,302", "108,290 108,315", "231,290 231,315", "322,290 322,315", "65,66 65,266", "48,66 90,66", "48,158 90,158", "48,266 90,266", "150,60 191,107", "225,83 255,60", "275,186 335,240"],
    labels: [[156,314,"b",34],[264,314,"a",34],[84,130,"d",34,-90],[84,222,"c",34,-90],[116,56,"拉筋1",21],[262,56,"箍筋1",21],[362,118,"箍筋 2",21,-90],[362,235,"拉筋 2",21,-90]],
    name: [150, 384, "L-c", 54],
  },
  {
    wall: "94,73 313,73 313,163 185,163 185,263 94,263",
    bars: ["105,84 303,84 303,150 105,150 105,84", "105,150 105,251 173,251 173,84", "105,189 173,189", "241,84 241,150"],
    yellow: [[111,87],[168,87],[232,87],[295,87],[111,143],[168,143],[232,143],[295,143],[111,192],[168,192],[111,245],[168,245]],
    pink: [[182,80],[241,108],[104,160],[132,187]],
    red: [136, 111],
    dims: ["90,298 315,298", "90,285 90,310", "185,285 185,310", "315,285 315,310", "355,73 355,263", "332,73 372,73", "332,163 372,163", "332,263 372,263", "182,80 175,58", "241,108 262,58"],
    labels: [[124,310,"a",34],[236,310,"b",34],[368,125,"d",34,-90],[368,218,"c",34,-90],[128,54,"箍筋1",21],[218,54,"拉筋1",21],[82,128,"箍筋 2",21,-90],[82,245,"拉筋 2",21,-90]],
    name: [148, 382, "L-d", 60],
  },
  {
    wall: "163,49 251,76 205,206 311,206 311,301 82,301 163,49",
    bars: ["171,62 231,83 189,216 299,216 299,286 102,286 171,62", "124,219 299,219", "163,286 194,219", "149,136 205,151", "248,216 248,286"],
    yellow: [[174,69],[226,86],[152,136],[203,151],[125,222],[178,222],[238,222],[291,222],[106,281],[185,281],[238,281],[291,281]],
    pink: [[178,136],[126,194],[248,249],[204,288]],
    red: [143, 252],
    dims: ["165,22 260,50", "135,45 85,175", "205,320 315,320", "338,205 338,305", "178,136 250,116", "248,249 282,205", "90,218 126,194", "175,322 204,288"],
    labels: [[205,45,"a",20,16],[114,112,"c",20,-72],[250,330,"b",20],[345,262,"d",20,-90],[252,124,"拉筋2",21],[230,186,"jd",21],[272,186,"拉筋1",21],[28,226,"箍筋2",21],[124,332,"箍筋1",21]],
    name: [165, 394, "L-a1", 36],
  },
  {
    wall: "170,86 252,51 345,283 80,283 80,191 208,191 170,86",
    bars: ["180,91 245,71 324,271 90,271 90,204 220,204 180,91", "90,204 302,204", "230,204 253,266", "208,151 268,133", "166,204 166,271"],
    yellow: [[187,96],[245,73],[211,154],[268,133],[94,207],[157,207],[230,207],[297,207],[94,264],[157,264],[252,264],[319,264]],
    pink: [[232,138],[295,187],[165,241],[197,270]],
    red: [269, 236],
    dims: ["158,65 250,28", "285,42 330,155", "78,310 212,310", "50,190 50,285", "168,118 232,138", "295,187 330,193", "110,180 165,241", "197,270 240,308"],
    labels: [[195,50,"a",20,-20],[306,108,"c",20,70],[140,320,"b",20],[56,240,"d",20,-90],[108,126,"拉筋2",21],[162,175,"jd",21],[72,182,"拉筋1",21],[330,201,"箍筋2",21],[218,316,"箍筋1",21]],
    name: [178, 390, "L-b1", 36],
  },
  {
    wall: "83,67 361,67 273,305 179,272 226,162 83,162 83,67",
    bars: ["91,78 346,78 268,289 195,265 250,78", "91,78 91,150 320,150", "172,78 172,150", "216,201 283,220"],
    yellow: [[100,83],[163,83],[255,83],[334,83],[100,142],[163,142],[238,142],[312,142],[218,201],[284,220],[198,262],[261,282]],
    pink: [[207,78],[172,108],[312,161],[251,201]],
    red: [285, 109],
    dims: ["82,38 215,38", "82,28 82,50", "215,28 215,50", "52,62 52,165", "38,62 72,62", "38,165 72,165", "345,185 298,315", "170,300 270,328", "207,78 240,42", "172,108 120,170", "312,161 345,145", "251,201 190,235"],
    labels: [[143,46,"b",20],[60,120,"d",20,-90],[330,255,"c",20,-72],[212,318,"a",20,16],[242,42,"箍筋1",21],[74,194,"拉筋1",21],[162,196,"jd",21],[118,248,"拉筋2",21],[348,152,"箍筋2",21]],
    name: [178, 392, "L-c1", 36],
  },
  {
    wall: "66,67 349,67 349,166 204,166 244,277 149,305 66,67",
    bars: ["81,79 335,79 335,152 109,152", "81,79 161,289 234,267 167,79", "141,220 199,205", "269,79 269,152"],
    yellow: [[91,84],[157,84],[260,84],[329,84],[114,146],[179,146],[260,146],[329,146],[141,220],[199,205],[164,284],[220,266]],
    pink: [[177,79],[114,164],[269,107],[166,203]],
    red: [133, 109],
    dims: ["205,36 352,36", "205,24 205,48", "352,24 352,48", "382,66 382,168", "362,66 402,66", "362,168 402,168", "80,205 125,318", "155,325 255,295", "177,79 155,52", "114,164 75,152", "269,107 295,180", "166,203 240,232"],
    labels: [[272,44,"b",20],[390,122,"d",20,-90],[106,262,"c",20,72],[198,322,"a",20,-16],[100,50,"箍筋1",21],[14,158,"箍筋2",21],[180,178,"jd",21],[268,195,"拉筋1",21],[242,244,"拉筋2",21]],
    name: [194, 394, "L-d1", 36],
  },
  {
    wall: "M50 10V346H378M50 18H378M176 18V226H378",
    bars: ["55,45 167,45 167,50 60,50 55,100 167,100", "55,132 167,132 140,140 167,185 55,185 55,132", "55,235 167,235 167,338 55,338 55,235", "215,235 265,235 265,300 215,338", "295,235 295,330 310,335", "345,235 372,240 372,335 350,335"],
    yellow: [[58,52],[154,52],[58,101],[154,101],[58,139],[154,139],[58,191],[154,191],[58,241],[154,241],[58,328],[154,328],[204,241],[253,241],[204,328],[253,328],[301,241],[356,241],[301,328],[356,328]],
    pink: [[89,46],[89,91],[89,182],[52,214],[184,336],[214,310],[310,310],[367,310]],
    red: [106, 286],
    dims: ["89,46 176,66", "89,91 180,58", "30,140 89,182", "52,214 30,250", "214,310 250,358", "338,195 338,270 310,310", "338,270 367,310", "145,336 140,350", "196,135 196,210", "176,208 270,208", "400,30 400,345"],
    labels: [[188,64,"拉筋3",21],[30,125,"拉筋2",21,-90],[30,280,"箍筋2",21,-90],[104,374,"箍筋1",21],[214,380,"拉筋1",21],[312,194,"拉筋4",21],[110,24,"a",18,0,"#ff2020"],[283,26,"b",18],[402,134,"c",18],[402,296,"d",18],[222,216,"e",18],[200,172,"f",18,-90]],
    name: [186, 410, "I-a2", 22],
    white: true,
  },
];

const ThumbArt = ({ d }: { d: Thumb }) => (
  <svg viewBox="0 0 420 420" width="140" height="140" className="block bg-[#008080] font-[family-name:'Noto_Sans_CJK_SC','Liberation_Sans',sans-serif]">
    {d.white ? (
      <path d={d.wall} fill="none" stroke="#e8f4f0" strokeWidth="3" />
    ) : (
      <polygon points={d.wall} fill="none" stroke="#a8d8d0" strokeWidth="3" />
    )}
    {d.dims.map((p, i) => (
      <polyline key={i} points={p} fill="none" stroke="#d8f0ec" strokeWidth="2" />
    ))}
    {d.bars.map((p, i) => (
      <polyline key={i} points={p} fill="none" stroke="#00ffff" strokeWidth="4" />
    ))}
    {d.yellow.map(([x, y], i) => (
      <circle key={i} cx={x} cy={y} r="6" fill="#ffff00" />
    ))}
    {d.pink.map(([x, y], i) => (
      <circle key={i} cx={x} cy={y} r="5.500" fill="#ff00ff" />
    ))}
    <circle cx={d.red[0]} cy={d.red[1]} r="5.500" fill="#ff0000" />
    {d.labels.map(([x, y, t, size, rot, color], i) => (
      <text key={i} x={0} y={0} fontSize={size ?? 21} fill={color ?? "#e6f6f2"} transform={`translate(${x} ${y}) rotate(${rot ?? 0})`} textAnchor={rot ? "middle" : "start"}>
        {t}
      </text>
    ))}
    <text x={d.name[0]} y={d.name[1]} fontSize={d.name[3]} fill={d.white ? "#fff" : "#00ffff"}>
      {d.name[2]}
    </text>
  </svg>
);

const SEL_CELL = 6;

// the big preview, drawn on the coordinates of a 3x view of it
const Preview = () => (
  <svg viewBox="9 38 1404 1367" width="468" height="462" preserveAspectRatio="none" className="block bg-black font-[family-name:'Liberation_Serif','Noto_Sans_CJK_SC',serif]">
    <g stroke="#fff" strokeWidth="2.500" fill="none">
      <path d="M197 282H1273L950 1235M197 282V658H730L578 1115M623 987L1138 1155" />
      <path d="M197 145V265M733 145V265M197 202H405M547 202H733M175 224L218 181M712 224L755 181" />
      <path d="M48 282H187M48 658H187M109 282V440M109 510V658M84 260L128 304M84 636L128 680" />
      <path d="M900 192L812 296M492 540L345 740M1097 705L1235 630M805 815L592 923" />
      <path d="M606 660Q625 735 700 748" />
      <path d="M600 1060L700 1090M845 1138L975 1178M570 1068L626 1043M942 1192L998 1168" />
      <path d="M1120 782L1250 828M1190 810L1155 930M1120 1020L1085 1135M1178 782L1205 836M1068 1108L1095 1162" />
    </g>
    <g stroke="#00ffff" strokeWidth="6" fill="none">
      <path d="M218 308H1237L982 1075L655 970L870 320" />
      <path d="M218 308V633H1130" />
      <path d="M495 610V345Q495 322 525 318Q555 322 557 370M495 610Q500 628 525 630Q552 628 553 575" />
      <path d="M725 795L1000 885Q1040 890 1045 870M752 748L790 755M1000 825L1040 840" />
      <path d="M268 552L225 597M305 580L268 622M728 897L670 940M755 935L700 972" />
    </g>
    <g fill="#00ffff">
      {[[242,330],[523,330],[893,330],[1198,330],[242,607],[523,607],[798,607],[1102,607],[743,767],[1025,857],[680,950],[962,1043]].map(([x, y]) => (
        <circle key={`${x}-${y}`} cx={x} cy={y} r="25" />
      ))}
    </g>
    <g fill="#ff00ff">
      <circle cx="799" cy="306" r="14" />
      <circle cx="493" cy="540" r="15" />
      <circle cx="1096" cy="705" r="15" />
      <circle cx="805" cy="815" r="15" />
    </g>
    <circle cx="1010" cy="463" r="14" fill="#ff0000" />
    <rect x="63" y="686" width="453" height="192" rx="6" fill="none" stroke="#ff2a1a" strokeWidth="7" />
    <g fill="#00ee00" fontSize="93" textAnchor="middle">
      <text x="475" y="232">400</text>
      <text x="108" y="504">300</text>
      <text x="603" y="770">135</text>
      <text x="1142" y="1008">400</text>
    </g>
    <text x="773" y="1158" fill="#ff0000" fontSize="93" textAnchor="middle">300</text>
    <g fill="#fff" fontSize="90" fontWeight="300">
      <text x="830" y="183" letterSpacing="5">箍筋1</text>
      <text x="185" y="812" letterSpacing="5">拉筋1</text>
      <text transform="translate(1265 735) rotate(-62)" letterSpacing="5">箍筋2</text>
      <text transform="translate(478 1090) rotate(-62)" letterSpacing="5">拉筋2</text>
    </g>
    <text x="558" y="1317" fill="#fff" fontSize="122" letterSpacing="6">L-c1</text>
    <line x1="531" y1="1346" x2="818" y2="1346" stroke="#fff" strokeWidth="5" />
  </svg>
);

const ParamDialog = () => (
  <div className="absolute left-[545px] top-[231px] flex h-[577px] w-[958px] flex-col bg-white pl-[12px] shadow-[0_0_8px_rgba(0,0,0,0.45)]">
    <div className="flex h-[40px] shrink-0 items-center justify-between">
      <span className="text-[13px]">选择参数化图形</span>
      <div className="mb-[2px] mr-[13px] flex items-center gap-[17px]">
        <span className="h-[10px] w-[10px] border border-[#666]" />
        <X size={15} color="#777" strokeWidth={1.300} />
      </div>
    </div>
    <div className="flex h-[26px] shrink-0 items-center">
      <span className="w-[102px]">参数化截面类型：</span>
      <div className="flex h-[26px] w-[89px] items-center justify-between rounded-[4px] border border-[#ccc] pl-[3px] pr-[6px]">
        L形
        <Caret className="ml-0" />
      </div>
      <span className="ml-[275px]">单位：</span>
      <span className="ml-[6px]">mm</span>
    </div>
    <div className="mt-[6px] flex shrink-0 items-start">
      <div className="grid h-[461px] w-[460px] grid-cols-[152px_153px_153px] grid-rows-[152px_153px_153px] border-l-2 border-t-2 border-[#d4d4d4]">
        {THUMBS.map((t, i) => (
          <div key={t.name[2]} className={`relative border-b-2 border-r-2 border-[#d4d4d4] ${i % 3 === 0 ? "pl-[5px]" : "pl-[6px]"} ${i < 3 ? "pt-[5px]" : "pt-[6px]"}`}>
            <ThumbArt d={t} />
            {i === SEL_CELL && <div className="absolute inset-0 border-[3px] border-[#1890ff] shadow-[inset_0_0_0_3px_#a8d1ff]" />}
          </div>
        ))}
      </div>
      <div className="ml-[6px]">
        <Preview />
      </div>
    </div>
    <div className="mt-[7px] flex items-center">
      <button className="ml-[768px] flex h-[26px] w-[80px] items-center justify-center rounded-[4px] bg-[#2e7fe0] text-white">确定</button>
      <button className="ml-[6px] flex h-[26px] w-[80px] items-center justify-center rounded-[4px] border border-[#ccc] bg-white">取消</button>
    </div>
    <span className="absolute bottom-[2px] right-[2px] text-[8px] leading-none text-[#777]">⠴</span>
  </div>
);

export default function App() {
  return (
    <div className="relative flex h-[996px] w-[1619px] flex-col overflow-hidden bg-[#f0f0f0] text-[12px] leading-none text-[#333] font-[family-name:'Noto_Sans_CJK_SC','Liberation_Sans',sans-serif]">
      <TitleBar />
      <TabBar />
      <Ribbon />
      <FilterBar />
      <div className="flex min-h-0 flex-1">
        <LeftPanel />
        <div className="ml-[4px] flex h-full w-[362px] shrink-0 flex-col">
          <TopPanel />
          <PropPanel />
        </div>
        <div className="w-[5px] shrink-0" />
        <Canvas />
        <RightEdge />
      </div>
      <ParamDialog />
    </div>
  );
}
